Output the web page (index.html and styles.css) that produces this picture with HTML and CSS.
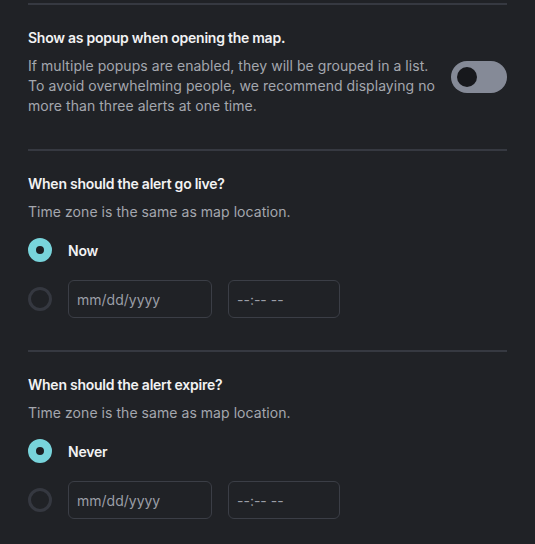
FILE: index.html
```html
<!DOCTYPE html>
<html lang="en">
<head>
<meta charset="utf-8">
<title>Alert settings</title>
<link rel="stylesheet" href="styles.css">
</head>
<body>
<div class="page">
  <section class="section section-first">
    <div class="popup-row">
      <div class="popup-text">
        <h3 class="title">Show as popup when opening the map.</h3>
        <p class="desc">If multiple popups are enabled, they will be grouped in a list. To avoid overwhelming people, we recommend displaying no more than three alerts at one time.</p>
      </div>
      <div class="toggle"><span class="knob"></span></div>
    </div>
  </section>
  <section class="section">
    <h3 class="title">When should the alert go live?</h3>
    <p class="desc">Time zone is the same as map location.</p>
    <div class="option">
      <span class="radio checked"></span>
      <span class="option-label">Now</span>
    </div>
    <div class="option option-inputs">
      <span class="radio"></span>
      <input class="field field-date" type="text" placeholder="mm/dd/yyyy">
      <input class="field field-time" type="text" placeholder="--:-- --">
    </div>
  </section>
  <section class="section">
    <h3 class="title">When should the alert expire?</h3>
    <p class="desc">Time zone is the same as map location.</p>
    <div class="option">
      <span class="radio checked"></span>
      <span class="option-label">Never</span>
    </div>
    <div class="option option-inputs">
      <span class="radio"></span>
      <input class="field field-date" type="text" placeholder="mm/dd/yyyy">
      <input class="field field-time" type="text" placeholder="--:-- --">
    </div>
  </section>
</div>
</body>
</html>
```
FILE: styles.css
```css
* { box-sizing: border-box; }
html, body {
  margin: 0;
  padding: 0;
  background: #202226;
  height: 100%;
}
body {
  font-family: Inter, "Noto Sans", sans-serif;
  color: #a4a7ae;
  font-size: 14px;
}
.page {
  padding: 3px 28px 0;
}
.section {
  border-top: 2px solid #363941;
  padding: 23px 0 32px;
}
.section-first {
  padding-bottom: 33px;
}
.title {
  margin: 0;
  font-size: 14px;
  line-height: 20px;
  font-weight: 600;
  letter-spacing: -0.25px;
  color: #f2f2f3;
}
.desc {
  margin: 8px 0 0;
  font-size: 14px;
  line-height: 20px;
  letter-spacing: 0.05px;
  color: #a4a7ae;
}
.popup-row {
  display: flex;
  align-items: flex-start;
  justify-content: space-between;
  gap: 10px;
}
.popup-text { flex: 1; }
.toggle {
  flex: none;
  width: 56px;
  height: 32px;
  border-radius: 16px;
  background: #858a97;
  margin-top: 33px;
  display: flex;
  align-items: center;
  padding-left: 6px;
}
.knob {
  width: 20px;
  height: 20px;
  border-radius: 50%;
  background: #17181c;
}
.option {
  display: flex;
  align-items: center;
  gap: 16px;
  margin-top: 16px;
  height: 24px;
}
.option-inputs {
  margin-top: 18px;
  height: 38px;
}
.radio {
  flex: none;
  width: 24px;
  height: 24px;
  border-radius: 50%;
  border: 3px solid #353840;
}
.radio.checked {
  border: 8px solid #78d4db;
  background: #1c1e22;
}
.option-label {
  color: #f2f2f3;
  font-weight: 600;
  font-size: 14px;
  letter-spacing: -0.2px;
}
.field {
  height: 38px;
  background: #202226;
  border: 1px solid #3b3e46;
  border-radius: 6px;
  padding: 0 8px;
  font-family: inherit;
  font-size: 14px;
  color: #e0e0e0;
  outline: none;
}
.field::placeholder { color: #9b9ea6; }
.field-date { width: 144px; }
.field-time { width: 112px; }
```
